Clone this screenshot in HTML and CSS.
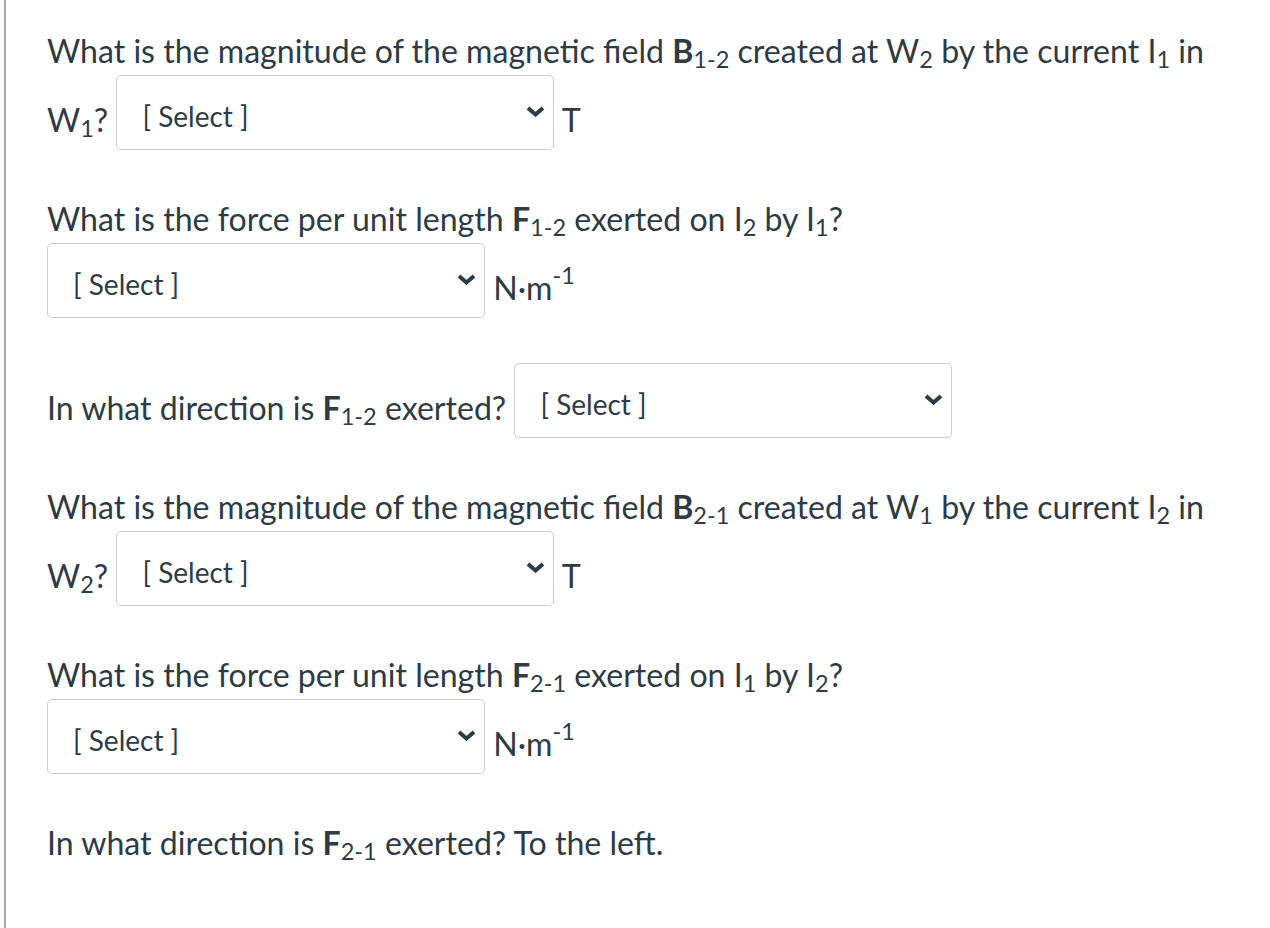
FILE: index.html
```html
<!DOCTYPE html>
<html lang="en">
<head>
<meta charset="utf-8">
<title>Magnetic field questions</title>
<link rel="stylesheet" href="styles.css">
</head>
<body>
<div class="page">
  <div class="content">
    <p class="q">What is the magnitude of the magnetic field <b>B</b><sub>1-2</sub> created at W<sub>2</sub> by the current I<sub>1</sub> in W<sub>1</sub>? <span class="sel"><span class="sel-text">[ Select ]</span><svg class="chev" width="19" height="11" viewBox="0 0 19 11"><polyline points="2,2 9.5,8.5 17,2" fill="none" stroke="#2d3b45" stroke-width="4"/></svg></span> T</p>

    <p class="q">What is the force per unit length <b>F</b><sub>1-2</sub> exerted on I<sub>2</sub> by I<sub>1</sub>? <span class="sel"><span class="sel-text">[ Select ]</span><svg class="chev" width="19" height="11" viewBox="0 0 19 11"><polyline points="2,2 9.5,8.5 17,2" fill="none" stroke="#2d3b45" stroke-width="4"/></svg></span> N·m<sup>-1</sup></p>

    <p class="q">In what direction is <b>F</b><sub>1-2</sub> exerted? <span class="sel"><span class="sel-text">[ Select ]</span><svg class="chev" width="19" height="11" viewBox="0 0 19 11"><polyline points="2,2 9.5,8.5 17,2" fill="none" stroke="#2d3b45" stroke-width="4"/></svg></span></p>

    <p class="q">What is the magnitude of the magnetic field <b>B</b><sub>2-1</sub> created at W<sub>1</sub> by the current I<sub>2</sub> in W<sub>2</sub>? <span class="sel"><span class="sel-text">[ Select ]</span><svg class="chev" width="19" height="11" viewBox="0 0 19 11"><polyline points="2,2 9.5,8.5 17,2" fill="none" stroke="#2d3b45" stroke-width="4"/></svg></span> T</p>

    <p class="q">What is the force per unit length <b>F</b><sub>2-1</sub> exerted on I<sub>1</sub> by I<sub>2</sub>? <span class="sel"><span class="sel-text">[ Select ]</span><svg class="chev" width="19" height="11" viewBox="0 0 19 11"><polyline points="2,2 9.5,8.5 17,2" fill="none" stroke="#2d3b45" stroke-width="4"/></svg></span> N·m<sup>-1</sup></p>

    <p class="q">In what direction is <b>F</b><sub>2-1</sub> exerted? To the left.</p>
  </div>
</div>
</body>
</html>
```

FILE: styles.css
```css
html, body {
  margin: 0;
  padding: 0;
  background: #ffffff;
}

body {
  font-family: Lato, "Open Sans", sans-serif;
  color: #2d3b45;
}

.page {
  margin-left: 4px;
  border-left: 2px solid #a9a9a9;
  min-height: 928px;
  box-sizing: border-box;
  padding-left: 41px;
  padding-right: 24px;
}

.content {
  padding-top: 27px;
}

.q {
  margin: 0 0 45px;
  font-size: 32.1px;
  line-height: 48px;
}

.q b {
  font-weight: 700;
}

.q sub {
  font-size: 23.5px;
  line-height: 0;
  vertical-align: -5px;
}

.q sup {
  font-size: 23.5px;
  line-height: 0;
  vertical-align: 16px;
}

.sel {
  display: inline-flex;
  align-items: center;
  justify-content: space-between;
  box-sizing: border-box;
  width: 438px;
  height: 75px;
  border: 1px solid #c7cdd1;
  border-radius: 5px;
  background: #ffffff;
  padding: 0 8px 0 25px;
  vertical-align: 5px;
}

.sel-text {
  margin-top: 6px;
  line-height: 48px;
  font-size: 28px;
}

.chev {
  display: block;
  flex: none;
  margin-top: -2px;
}
```
